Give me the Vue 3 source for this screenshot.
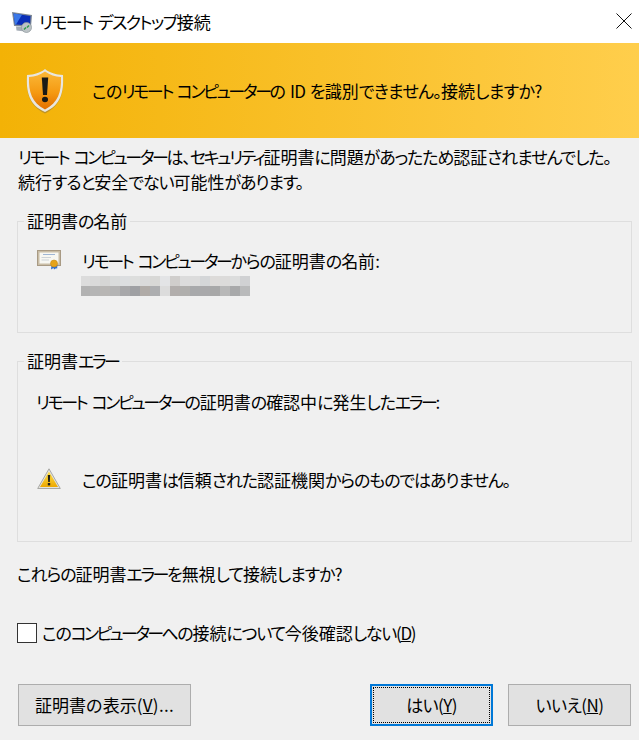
<script setup>
const row1 = ['#dcdcdc','#dadada','#d6d6d5','#dadcdc','#dcdee0','#dddedd','#dadada','#d8d8d6','#e3e4e6','#d0cecc','#dcdcdc','#dcdcdc','#d4d6d8','#dddbd9','#dcdbda','#dcdddd','#d0d1d3']
const row2 = ['#b2b2b2','#b5b5b5','#b8b6b4','#b4b4b4','#a8a8aa','#9fa0a3','#b0aba7','#adaeb0','#dcdcdc','#b2aeac','#b0afad','#a8a9ab','#a9a9ab','#a8a8a8','#b8b8b8','#a8a9aa','#b9babb']
</script>

<template>
  <div class="dialog">
    <header class="titlebar">
      <svg class="app-icon" width="22" height="22" viewBox="0 0 22 22">
        <path d="M1 1 L21 4 L20 16 L3 15 Z" fill="#7c8794"/>
        <path d="M2.500 2.500 L19.500 5 L19 14.500 L4 13.500 Z" fill="#0a2fb8"/>
        <path d="M2.500 2.500 L11 3.800 L5 13.500 L4 13.500 Z" fill="#3a78e8"/>
        <path d="M5 15.500 L13 16 L14 20.500 L5.500 19.500 Z" fill="#a4acb5"/>
        <circle cx="15.500" cy="16.500" r="5" fill="#bcc3c6" stroke="#8a9398" stroke-width=".7"/>
        <path d="M13 18.500 L15 16.500 M16 16.500 L18 14.500" stroke="#2c9a4a" stroke-width="1.500"/>
      </svg>
      <span class="title"><span class="ka">リモート</span> <span class="ka">デスクトップ</span><span class="kj">接続</span></span>
      <svg class="close" width="16" height="16" viewBox="0 0 16 16">
        <path d="M.5 .5 L15.500 15.500 M15.500 .5 L.5 15.500" stroke="#111" stroke-width="1" fill="none"/>
      </svg>
    </header>

    <section class="banner">
      <svg class="shield" width="40" height="46" viewBox="0 0 40 46">
        <defs>
          <linearGradient id="sh" x1="0" y1="0" x2="0" y2="1">
            <stop offset="0" stop-color="#fbb838"/>
            <stop offset=".55" stop-color="#f59a12"/>
            <stop offset="1" stop-color="#e36f00"/>
          </linearGradient>
        </defs>
        <path d="M20 1 C25 5 31 6.500 38 7 C39 24 36 37 20 45 C4 37 1 24 2 7 C9 6.500 15 5 20 1 Z" fill="#7d6a4a" opacity=".45" transform="translate(0 .5)"/>
        <path d="M20 1 C25 5 31 6.500 38 7 C39 24 36 37 20 44 C4 37 1 24 2 7 C9 6.500 15 5 20 1 Z" fill="#e9e6de"/>
        <path d="M20 3.500 C25 7 30 8.500 36 9 C36.500 24 33 35 20 41.500 C7 35 3.500 24 4 9 C10 8.500 15 7 20 3.500 Z" fill="url(#sh)"/>
        <path d="M16.800 9.500 H23.200 L22 27 H18 Z" fill="#1b1a16"/>
        <ellipse cx="20" cy="31.500" rx="3" ry="2.800" fill="#1b1a16"/>
      </svg>
      <p class="banner-text">この<span class="ka">リモート</span> <span class="ka">コンピューター</span>の ID を<span class="kj">識別</span>できません。<span class="kj">接続</span>しますか?</p>
    </section>

    <main class="body">
      <p class="intro"><span class="ka">リモート</span> <span class="ka">コンピューター</span>は、<span class="ka">セキュリティ</span><span class="kj">証明書</span>に<span class="kj">問題</span>があったため<span class="kj">認証</span>されませんでした。<br><span class="kj">続行</span>すると<span class="kj">安全</span>でない<span class="kj">可能性</span>があります。</p>

      <fieldset class="group name-group">
        <legend><span class="kj">証明書</span>の<span class="kj">名前</span></legend>
        <div class="item">
          <svg class="cert" width="24" height="20" viewBox="0 0 24 20">
            <rect x=".5" y=".5" width="23" height="15" fill="#c9bda6" stroke="#a89a84"/>
            <rect x="2.500" y="2.500" width="19" height="11" fill="#f7f7f2"/>
            <path d="M6 4.500 H18" stroke="#9fb6d4"/>
            <path d="M4.500 7.500 H14 M4.500 10 H12" stroke="#cdd3d8"/>
            <path d="M14.500 15 L14 19.500 L16.500 18 L17 19.500 L19.500 18 L20 19.500 L20.500 15 Z" fill="#2f6fd0"/>
            <circle cx="17" cy="13.500" r="3.500" fill="#e5a31a" stroke="#c98a10" stroke-width=".6"/>
          </svg>
          <div>
            <p class="item-text"><span class="ka">リモート</span> <span class="ka">コンピューター</span>からの<span class="kj">証明書</span>の<span class="kj">名前</span>:</p>
            <div class="mosaic">
              <div class="mosaic-row"><i v-for="(c, i) in row1" :key="i" :style="{ background: c }"></i></div>
              <div class="mosaic-row"><i v-for="(c, i) in row2" :key="i" :style="{ background: c }"></i></div>
            </div>
          </div>
        </div>
      </fieldset>

      <fieldset class="group error-group">
        <legend><span class="kj">証明書</span><span class="ka">エラー</span></legend>
        <p class="error-lead"><span class="ka">リモート</span> <span class="ka">コンピューター</span>の<span class="kj">証明書</span>の<span class="kj">確認中</span>に<span class="kj">発生</span>した<span class="ka">エラー</span>:</p>
        <div class="item warn-item">
          <svg class="warn" width="24" height="22" viewBox="0 0 24 22">
            <defs>
              <linearGradient id="wr" x1="0" y1="0" x2="0" y2="1">
                <stop offset="0" stop-color="#ffe14d"/>
                <stop offset="1" stop-color="#eda800"/>
              </linearGradient>
            </defs>
            <path d="M12 .8 L23.300 20.500 H.7 Z" fill="#e3e3e0" stroke="#a8a8a4" stroke-linejoin="round"/>
            <path d="M12 3.500 L21 19 H3 Z" fill="url(#wr)"/>
            <path d="M10.800 7 H13.200 L12.800 14 H11.200 Z" fill="#20201a"/>
            <rect x="10.800" y="15" width="2.400" height="2.400" fill="#20201a"/>
          </svg>
          <p class="item-text">この<span class="kj">証明書</span>は<span class="kj">信頼</span>された<span class="kj">認証機関</span>からのものではありません。</p>
        </div>
      </fieldset>

      <p class="question">これらの<span class="kj">証明書</span><span class="ka">エラー</span>を<span class="kj">無視</span>して<span class="kj">接続</span>しますか?</p>

      <label class="check">
        <input type="checkbox" class="box">
        <span>この<span class="ka">コンピューター</span>への<span class="kj">接続</span>について<span class="kj">今後確認</span>しない(<u>D</u>)</span>
      </label>

      <footer class="actions">
        <button class="btn show"><span class="kj">証明書</span>の<span class="kj">表示</span>(<u>V</u>)...</button>
        <span class="spacer"></span>
        <button class="btn yes"><span class="focus">はい(<u>Y</u>)</span></button>
        <button class="btn no">いいえ(<u>N</u>)</button>
      </footer>
    </main>
  </div>
</template>

<style>
html, body { margin: 0; background: #f0f0f0; }
</style>

<style scoped>
.dialog {
  width: 639px;
  height: 740px;
  overflow: hidden;
  background: #f0f0f0;
  color: #000;
  font-family: "Noto Sans CJK JP", "Noto Sans", sans-serif;
  font-size: 17px;
  line-height: 24px;
  letter-spacing: -1.1px;
  word-spacing: 2.5px;
  font-feature-settings: "palt" 1;
}
p { margin: 0; }
.ka { letter-spacing: -2.4px; }
.kj { letter-spacing: 0; }
.titlebar {
  height: 43px;
  background: #fff;
  display: flex;
  align-items: center;
  padding: 0 7px 0 11px;
  box-sizing: border-box;
}
.app-icon { margin-right: 6px; }
.title { flex: 1; }
.title .ka { letter-spacing: -1.6px; }
.close { margin-bottom: 1px; }
.banner {
  height: 95px;
  box-sizing: border-box;
  display: flex;
  align-items: center;
  padding-left: 25px;
  background: linear-gradient(90deg, #f3b206 0%, #ffce4c 100%);
}
.banner-text { margin-left: 27px; padding-top: 1px; letter-spacing: -.7px; word-spacing: 1.5px; }
.body { padding: 6px 7px 0 17px; }
.intro { padding-left: 1px; line-height: 25px; white-space: nowrap; }
.group {
  margin: 0;
  border: 1px solid #dedede;
  padding: 0;
  box-sizing: border-box;
  min-width: 0;
}
legend {
  margin-left: 6px;
  padding: 0 3px;
  line-height: 24px;
}
.name-group { height: 124px; margin-top: 15px; }
.error-group { height: 193px; margin-top: 16px; }
.item { display: flex; align-items: flex-start; }
.name-group .item { padding: 16px 0 0 19px; }
.cert { margin-top: 1px; margin-right: 21px; }
.mosaic { margin: 3px 0 0 -1px; }
.mosaic-row { display: flex; height: 10px; }
.mosaic-row i { width: 10px; display: block; }
.mosaic-row i:first-child { width: 9px; }
.error-lead { padding: 17px 0 0 18px; }
.warn-item { padding: 54px 0 0 19px; }
.warn { margin-right: 21px; }
.question { padding: 20px 0 0 0; }
.check {
  display: flex;
  align-items: center;
  margin-top: 35px;
  height: 24px;
  letter-spacing: -1.3px;
}
.check .ka { letter-spacing: -2.7px; }
.box {
  appearance: none;
  width: 20px;
  height: 20px;
  margin: 0 5px 0 0;
  box-sizing: border-box;
  background: #fff;
  border: 1px solid #333;
}
.actions {
  display: flex;
  margin: 39px 1px 0 0;
  padding-left: 1px;
  gap: 15px;
}
.spacer { flex: 1; }
.btn {
  height: 42px;
  box-sizing: border-box;
  border: 1px solid #adadad;
  background: #e1e1e1;
  font: inherit;
  letter-spacing: -.6px;
  color: #000;
  padding: 0;
}
.show { width: 173px; letter-spacing: .3px; }
.yes { width: 123px; border: 2px solid #0078d7; padding: 1px; }
.no { width: 123px; }
.focus {
  display: flex;
  align-items: center;
  justify-content: center;
  height: 100%;
  outline: 1px dotted #000;
  outline-offset: -1px;
}
</style>
